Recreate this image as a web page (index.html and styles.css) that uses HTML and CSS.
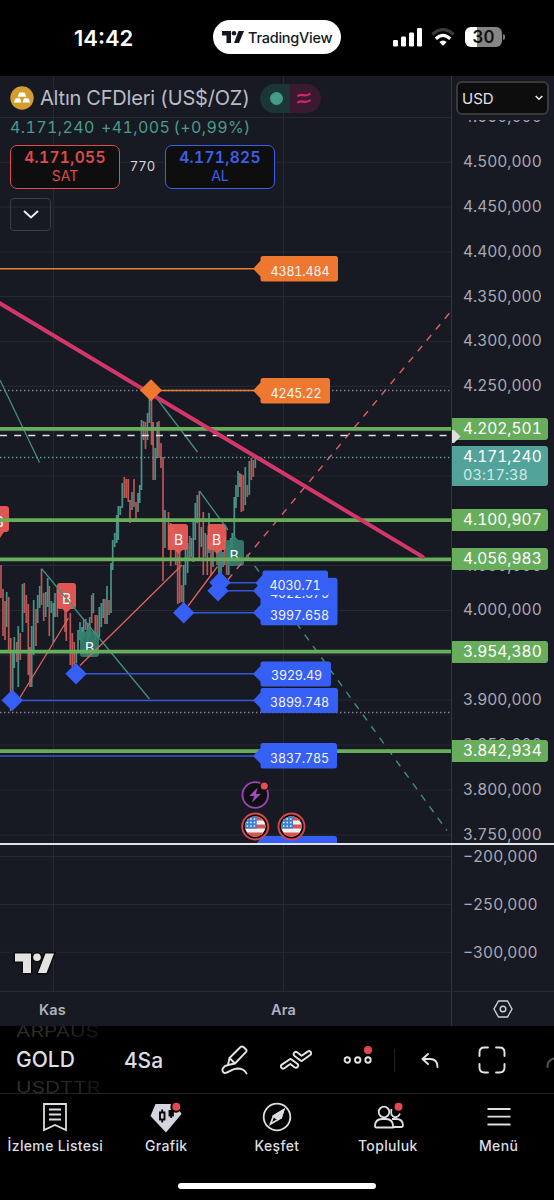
FILE: index.html
```html
<!DOCTYPE html>
<html lang="tr">
<head>
    <meta charset="UTF-8">
    <meta name="viewport" content="width=device-width, initial-scale=1.0">
    <title>GOLD - TradingView</title>
    <link rel="stylesheet" href="styles.css">
</head>
<body>
    <div class="status-bar">
        <div class="clock">14:42</div>
        <div class="island">
            <svg width="22" height="12" viewBox="0 0 22 12"><path d="M0 0h9v12H4.5V4.5H0z"/><circle cx="12" cy="2.3" r="2.3"/><path d="M16.5 0H22l-5 12h-5z"/></svg>
            <span>TradingView</span>
        </div>
        <div class="status-icons">
            <svg width="29" height="19" viewBox="0 0 29 19" fill="#fff"><rect x="0" y="12" width="5" height="6.5" rx="1.3"/><rect x="8" y="8.5" width="5" height="10" rx="1.3"/><rect x="16" y="4.5" width="5" height="14" rx="1.3"/><rect x="24" y="0" width="5" height="18.5" rx="1.3"/></svg>
            <svg class="wifi" width="24" height="19" viewBox="0 0 24 19" fill="none" stroke-width="3.2"><path d="M1.300 6.500Q12-3.500 22.700 6.500" stroke="#3a3a3a"/><path d="M4.800 10.700q7.200-6.600 14.400 0" stroke="#fff"/><path d="M8.300 14q3.700-3 7.400 0L12 17.800z" fill="#fff"/></svg>
            <div class="battery"><span>30</span></div>
        </div>
    </div>

    <div class="chart">
        <div class="chart-main">
            <div class="plot">
                <svg class="plot-svg" width="451" height="915" viewBox="0 76 451 915">
                    <!-- grid -->
                    <path class="grid" d="M53.500 76V991M283.500 76V991M0 117.500H451M0 162.300H451M0 207H451M0 252H451M0 296.500H451M0 341.400H451M0 386.300H451M0 431H451M0 476H451M0 521H451M0 565.500H451M0 610.500H451M0 655H451M0 700H451M0 745H451M0 790H451M0 835H451M0 856.500H451M0 904.500H451M0 952.300H451"/>

                    <!-- bars -->
                    <path class="bars down" d="M1 565V598M3 589V636M5 601V640M8.700 597V650M10.700 638V711M16.700 642V662M20.300 633V660M24.300 583V613M26.300 595V623M28.300 604V675M30 647V687M36 609V646M41.500 569V605M43.700 593V621M49.300 586V636M57.300 588V617M65 605V632M66.300 613V641M70.300 613V665M72.300 633V667M74.300 642V665M85.700 619V630M91.700 595V623M95.300 615V640M97.300 615V637M105 599V624M109 600V615M124.300 477V498M126.300 479V498M128.300 479V502M130 500V523M134 479V507M136 502V522M143.500 421V440M145.500 422V449M151.500 395V445M153.200 422V480M159 421V458M161 443V468M163 457V581M168.500 512V550M170.700 523V566M175.700 530V565M177.700 547V604M179.700 552V603M181.700 585V602M189.700 536V560M199.300 491V560M203.300 512V575M207.300 535V575M211 540V575M217 540V565M224.700 537V565M226.700 547V575M239.700 473V487M241.300 474V512M243.300 475V511M247.300 485V497M251.300 458V480M253.300 460V477"/>
                    <path class="bars up" d="M6.700 592V627M12.700 653V693M14.300 637V668M18.300 626V687M22.500 584V632M31.700 626V687M33.700 600V655M37.700 595V623M39.700 586V608M45.700 592V617M47.700 578V607M51.300 601V613M53.300 603V643M55 593V617M76.300 653V663M78 630V653M80 622V640M82 627V643M83.700 620V637M87.700 623V657M89.700 617V637M93.300 593V613M99.300 607V637M101.300 603V627M103.300 599V618M107 586V624M111 563V613M112.700 540V570M114.700 533V547M116.700 515V543M118.300 506V540M120.300 506V515M122.300 483V508M132 492V510M138 493V512M139.700 485V503M141.500 420V490M147.500 413V440M149.500 395V423M155.200 448V480M157.200 422V458M165 510V548M173 528V550M183.500 565V605M185.500 547V585M187.700 543V573M191.300 538V557M193.300 522V562M195.300 503V540M197.300 495V523M201.300 527V547M205.300 533V557M209 513V553M213 540V567M219 550V583M221 547V577M223 552V567M228.700 545V575M230.700 538V557M232.300 533V560M234.300 497V540M236 485V508M238 471V497M245.300 467V505M249.300 461V495M255.300 457V468"/>

                    <!-- buy / sell marks -->
                    <g class="mark mark-red">
                        <path d="M-10 509q0-3 3-3H6q3 0 3 3v20q0 3-3 3H4l-4 6-4-6h-3q-3 0-3-3z"/>
                        <path d="M57 586q0-3 3-3h13q3 0 3 3v20q0 3-3 3h-2.500l-4 4-4-4H60q-3 0-3-3z"/>
                        <path d="M168 527q0-3 3-3h14q3 0 3 3v20q0 3-3 3h-2.500l-4 4-4-4H171q-3 0-3-3z"/>
                        <path d="M207.500 527q0-3 3-3h13q3 0 3 3v20q0 3-3 3h-2.500l-4 4-4-4h-2.500q-3 0-3-3z"/>
                    </g>
                    <g class="mark mark-green">
                        <path d="M80 635q0-3 3-3h2l4-4 4 4h3q3 0 3 3v19q0 3-3 3H83q-3 0-3-3z"/>
                        <path d="M225.500 543q0-3 3-3h2l4-4 4 4h2.500q3 0 3 3v20q0 3-3 3h-12.500q-3 0-3-3z"/>
                    </g>
                    <g class="mark-text">
                        <text x="-1" y="527">B</text>
                        <text x="66.500" y="603.500">B</text>
                        <text x="178.500" y="544.500">B</text>
                        <text x="216.500" y="544.500">B</text>
                        <text x="89.500" y="653">B</text>
                        <text x="234" y="561">B</text>
                    </g>

                    <!-- trend lines -->
                    <path class="thin teal" d="M0 380L39.500 462.500M155 396L197.500 452M199.500 491L228 530M41.500 568.500L149.500 699"/>
                    <path class="thin red" d="M20 697.500L68.500 618M80 665.500L182 565M188 606L217.500 566.500"/>
                    <path class="dash red" d="M449.300 313.300L228 579.500"/>
                    <path class="dash teal" d="M246.500 554.500L447 830.500"/>

                    <path class="dots" d="M0 390.500H451M0 712.500H451"/>
                    <path class="dots dots-teal" d="M0 457.500H451"/>
                    <path class="level" d="M0 428.900H451M0 520.200H451M0 559.300H451M0 651.700H451M0 751.200H451"/>
                    <path class="alert-line" d="M0 435.500H451"/>
                    <path class="trend" d="M-2 302.100L422.700 556.900"/>

                    <!-- pivots -->
                    <path class="pivot orange-line" d="M0 268.700H256M151 390.500H256"/>
                    <path class="pivot blue-line" d="M220 582.700H258M218 590.700H256M184 612.700H256M76 673.700H256M12 700.500H256M0 756H256"/>
                    <path class="orange" d="M151 379.300l11 11-11 11-11-11z"/>
                    <path class="blue" d="M220 571.700l10.700 10.700-10.700 10.700-10.700-10.700zM218 580l10.700 10.700L218 601.400l-10.700-10.700zM183.700 602l10.700 10.700-10.700 10.700-10.700-10.700zM76 663l10.700 10.700L76 684.400l-10.700-10.700zM12.300 689.600L23 700.300 12.300 711 1.600 700.300z"/>

                    <!-- pivot labels -->
                    <g class="orange">
                        <path d="M253 268.700l7.500-8v-2q0-2.700 2.500-2.700h72.500q2.500 0 2.500 2.500V279q0 2.500-2.500 2.500H263q-2.500 0-2.500-2.500v-2.500z"/>
                        <path d="M253 390.500l7.500-8v-2q0-2.500 2.500-2.500h64.500q2.500 0 2.500 2.500v20.500q0 2.500-2.500 2.500H263q-2.500 0-2.500-2.500v-2.500z"/>
                    </g>
                    <g class="blue">
                        <path d="M253 590.700l7.500-8v-5h74.500q2.500 0 2.500 2.500v42.500q0 2.500-2.500 2.500H263q-2.500 0-2.500-2.500v-2.500l-7.500-7.500 7.500-8v-6z"/>
                    </g>
                    <text class="tag-text" x="270" y="598" textLength="59">4022.675</text>
                    <g class="blue">
                        <path d="M255.500 583l7-8v-2q0-2.500 2.500-2.500h60.500q2.500 0 2.500 2.500v22h-65.500v-4z"/>
                        <path d="M253 674l7.500-8v-2q0-2.500 2.500-2.500h65.500q2.500 0 2.500 2.500v20q0 2.500-2.500 2.500H263q-2.500 0-2.500-2.500v-2.500z"/>
                        <path d="M253 700.500l7.500-8v-2q0-2.500 2.500-2.500h72.500q2.500 0 2.500 2.500v20q0 2.500-2.500 2.500H263q-2.500 0-2.500-2.500v-2.500z"/>
                        <path d="M253 756l7.500-8v-2.500q0-2.500 2.500-2.500h71.500q2.500 0 2.500 2.500v20.500q0 2.500-2.500 2.500H263q-2.500 0-2.500-2.500v-2.500z"/>
                        <path d="M257 843l3.500-5q.5-2 2.500-2h71.500q2.500 0 2.500 2.500V843z"/>
                    </g>
                    <g class="tag-text">
                        <text x="270.500" y="276" textLength="59">4381.484</text>
                        <text x="270.500" y="398.300" textLength="51">4245.22</text>
                        <text x="269.500" y="590.300" textLength="51">4030.71</text>
                        <text x="270" y="620" textLength="59">3997.658</text>
                        <text x="271" y="680.300" textLength="51">3929.49</text>
                        <text x="270" y="707.300" textLength="59">3899.748</text>
                        <text x="270" y="763.300" textLength="59">3837.785</text>
                    </g>

                    <!-- events -->
                    <circle cx="255.300" cy="795" r="12.800" fill="#101014" stroke="#9a46b4" stroke-width="1.800"/>
                    <path d="M257.500 787.500l-8 8.500h4.700l-2.200 6.500 9-8.500h-5z" fill="#a34cbd"/>
                    <circle cx="264.300" cy="786" r="4.800" fill="#131319"/>
                    <circle cx="264.300" cy="786" r="3.500" fill="#ec4a4d"/>
                    <defs>
                        <clipPath id="flag-clip"><circle cx="0" cy="0" r="10.300"/></clipPath>
                        <g id="flag">
                            <circle cx="0" cy="0" r="13" fill="#0c0c0e" stroke="#dc4648" stroke-width="1.900"/>
                            <g clip-path="url(#flag-clip)">
                                <path d="M-11-11h22v22h-22z" fill="#f3f1f2"/>
                                <path d="M-11-10.500h22v4.500h-22zM-11-2h22v4h-22zM-11 6h22V11h-22z" fill="#d9544f"/>
                                <path d="M-11-11H1.500V2h-12.500z" fill="#3f7fd0"/>
                                <path d="M-8.500-7.500H1M-8.500-4H1M-8.500-.5H1" stroke="#e8f2fb" stroke-width="1.500" stroke-dasharray="1.500 2"/>
                            </g>
                        </g>
                    </defs>
                    <use href="#flag" x="255.200" y="826.500"/>
                    <use href="#flag" x="291.500" y="826.500"/>

                    <!-- logo -->
                    <g fill="#e3e3e1" stroke="#0c0c0d" stroke-width="3" paint-order="stroke">
                        <path d="M15 953.500h16V973h-8v-11.500h-8z"/>
                        <path d="M45.500 953.500H54L46.500 973H38z"/>
                        <circle cx="37" cy="957.200" r="3.800"/>
                    </g>
                </svg>

                <div class="legend">
                    <div class="legend-title">
                        <svg width="24" height="24" viewBox="0 0 24 24"><circle cx="12" cy="12" r="11.700" fill="#d49c31"/><path d="M9.300 6.500h5.400l1.700 4.300H7.600zM5.600 12.300h4.400l1.500 4.200H3.800zM14 12.300h4.400l1.800 4.200h-7.700z" fill="#fff"/></svg>
                        <h1>Altın CFDleri (US$/OZ)</h1>
                        <div class="market-state">
                            <span class="open"></span>
                            <span class="delayed"><svg width="16" height="13" viewBox="0 0 16 13" fill="none" stroke="#d52568" stroke-width="2.100"><path d="M1.500 4.500C5 0 8.500 6.500 14.500 1.500M1.500 11C5 6.500 8.500 13 14.500 8"/></svg></span>
                        </div>
                    </div>
                    <div class="quote"><span>4.171,240</span><span>+41,005</span><span>(+0,99%)</span></div>
                    <div class="trade">
                        <div class="trade-button sell"><b>4.171,055</b><span>SAT</span></div>
                        <div class="spread">770</div>
                        <div class="trade-button buy"><b>4.171,825</b><span>AL</span></div>
                    </div>
                    <div class="collapse"><svg width="16" height="9" viewBox="0 0 16 9" fill="none" stroke="#ececec" stroke-width="2"><path d="M1 1l7 6.500L15 1"/></svg></div>
                </div>
            </div>

            <div class="price-axis">
                <div class="scale">
                    <div>4.550,000</div>
                    <div>4.500,000</div>
                    <div>4.450,000</div>
                    <div>4.400,000</div>
                    <div>4.350,000</div>
                    <div>4.300,000</div>
                    <div>4.250,000</div>
                    <div></div>
                    <div></div>
                    <div></div>
                    <div>4.050,000</div>
                    <div>4.000,000</div>
                    <div></div>
                    <div>3.900,000</div>
                    <div>3.850,000</div>
                    <div>3.800,000</div>
                    <div>3.750,000</div>
                </div>
                <div class="scale scale-lower">
                    <div>−200,000</div>
                    <div>−250,000</div>
                    <div>−300,000</div>
                </div>
                <div class="currency">USD <svg width="8" height="6" viewBox="0 0 8 6" fill="none" stroke="#eee" stroke-width="1.600"><path d="M.7 1L4 4.200 7.300 1"/></svg></div>
                <div class="price-tag tag-1">4.202,501</div>
                <div class="price-tag last"><span>4.171,240</span><small>03:17:38</small></div>
                <div class="price-tag tag-2">4.100,907</div>
                <div class="price-tag tag-3">4.056,983</div>
                <div class="price-tag tag-4">3.954,380</div>
                <div class="price-tag tag-5">3.842,934</div>
                <svg class="alert-handle" width="9" height="15" viewBox="0 0 9 15"><path d="M0 1l2 0 6.500 6.500L2 14H0z" fill="#dedede"/></svg>
            </div>
            <div class="pane-separator"></div>
        </div>

        <div class="time-axis">
            <div class="months"><span>Kas</span><span>Ara</span></div>
            <div class="axis-settings">
                <svg width="20" height="18" viewBox="0 0 20 18" fill="none" stroke="#d0d1d6" stroke-width="1.400"><path d="M5.500 1h9L19 9l-4.500 8h-9L1 9z"/><circle cx="10" cy="9" r="2.800"/></svg>
            </div>
        </div>
    </div>

    <div class="toolbar">
        <div class="symbol-picker">
            <span class="ghost">ARPAUS</span>
            <span>GOLD</span>
            <span class="ghost">USDTTR</span>
        </div>
        <div class="interval">4Sa</div>
        <svg class="tool draw" width="28" height="30" viewBox="0 0 28 30"><path d="M7 20l1.500-7L19.500 2q1.500-1.200 3 0l2.300 2.200q1.500 1.500 0 3L14 18.500zM8.500 13l5.500 5.500M7 20c-5 1-7 5-4.500 7.500C6 30 9 24 16 23.500c5 0 8 1.500 9.500 5"/></svg>
        <svg class="tool patterns" width="32" height="20" viewBox="0 0 32 20"><path d="M9.500 9.500q1-.9 2 0l5.800 4.300q1.800 1.600.3 3.200-1.400 1.500-3.200.2l-4.100-3.300-6 4.300Q2.500 19.300 1.400 17.700 0 16 1.800 14.600zM22.500 10.500q-1 .9-2 0l-6-4.600Q12.800 4.300 14.300 2.600q1.400-1.500 3.200-.2l4.100 3.400 6-4.200q1.800-1.200 3 .3 1.400 1.700-.4 3.100z"/></svg>
        <svg class="tool more" width="30" height="26" viewBox="0 0 30 26"><circle cx="4.300" cy="15" r="2.700"/><circle cx="14.700" cy="15" r="2.700"/><circle cx="25" cy="15" r="2.700"/><circle class="badge-dot" cx="25" cy="5" r="4"/></svg>
        <div class="divider"></div>
        <svg class="tool undo" width="18" height="15" viewBox="0 0 18 15"><path d="M7 1L1.500 6 7 11M1.500 6H9q7.500 0 7.500 8"/></svg>
        <svg class="tool fullscreen" width="28" height="28" viewBox="0 0 28 28"><path d="M1.500 10V6.500q0-5 5-5H10M18 1.500h3.500q5 0 5 5V10M26.500 18v3.500q0 5-5 5H18M10 26.500H6.500q-5 0-5-5V18"/></svg>
        <svg class="tool partial" width="8" height="11" viewBox="0 0 8 11"><path d="M1.500 10Q1 3.500 8 1.500"/></svg>
    </div>

    <div class="bottom-nav">
        <div class="nav-item">
            <svg width="34" height="34" viewBox="0 0 34 34"><path d="M6 4h22v26l-11-5-11 5zM11 9.500h12M11 14.500h12M11 19.500h12"/></svg>
            <span>İzleme Listesi</span>
        </div>
        <div class="nav-item">
            <svg width="34" height="34" viewBox="0 0 34 34"><path d="M6.500 4h20L32.500 14 17 32.500 1.500 16z" fill="#d4d5df" stroke="none"/><path d="M11 12.500h4.500v7H11zM13.200 9.500v3M13.200 19.500v3" stroke="#08080a" stroke-width="1.900"/><path d="M20.500 11h3.500v4.500h-3.500zM22.200 14v4" fill="#08080a" stroke="#08080a"/><circle cx="27" cy="7" r="5.700" fill="#020202" stroke="none"/><circle class="badge-dot" cx="27.300" cy="6.700" r="4"/></svg>
            <span>Grafik</span>
        </div>
        <div class="nav-item">
            <svg width="34" height="34" viewBox="0 0 34 34"><circle cx="17" cy="17" r="13.300"/><path d="M23.500 10l-2.500 8-10.500 6 3-8z"/><path d="M23.500 10l-2.500 8-4.500.500-3-2.500z" fill="#d9d9de"/></svg>
            <span>Keşfet</span>
        </div>
        <div class="nav-item">
            <svg width="34" height="34" viewBox="0 0 34 34"><circle cx="13" cy="12" r="5.300"/><path d="M4 26.500q0-7.500 7-7.500h4q7 0 7 7.500v1H5.500Q4 27.500 4 26.500zM21 19h4q7 0 7 6.500 0 1.500-1.500 1.500H22M20.500 9q-1.500 7 3 8 4 .5 5.500-3.500"/><circle class="badge-dot" cx="27.500" cy="6.800" r="4"/></svg>
            <span>Topluluk</span>
        </div>
        <div class="nav-item">
            <svg width="34" height="34" viewBox="0 0 34 34"><path d="M5.500 9h23M5.500 16.700h23M5.500 24.500h23"/></svg>
            <span>Menü</span>
        </div>
    </div>
    <div class="home-indicator"></div>
</body>
</html>
```
FILE: styles.css
```css
* {
    box-sizing: border-box;
}

body {
    margin: 0;
    width: 554px;
    height: 1200px;
    overflow: hidden;
    background: #000;
    color: #dedee2;
    font-family: Inter, "Liberation Sans", sans-serif;
    font-variant-numeric: tabular-nums;
    display: flex;
    flex-direction: column;
}

svg {
    display: block;
    flex: none;
}

/* status bar */
.status-bar {
    height: 76px;
    padding: 0 52px 2px 74px;
    display: flex;
    align-items: center;
    flex: none;
    color: #fff;
}

.clock {
    width: 139px;
    font-size: 22px;
    font-weight: 600;
    font-variant-numeric: normal;
    padding-top: 1px;
}

.island {
    width: 128px;
    height: 34px;
    border-radius: 17px;
    background: #fff;
    color: #131722;
    display: flex;
    align-items: center;
    padding-left: 9px;
    gap: 4px;
    font-size: 14.5px;
    font-weight: 500;
    letter-spacing: -0.25px;
}

.island svg {
    fill: #131722;
}

.status-icons {
    margin-left: auto;
    display: flex;
    align-items: center;
}

.wifi {
    margin: 0 10px 0 9px;
}

.battery {
    width: 37px;
    height: 20px;
    border-radius: 6px;
    background: linear-gradient(90deg, #fff 0 12px, #858585 12px);
    color: #111;
    font-size: 17px;
    font-weight: 600;
    line-height: 20px;
    text-align: center;
    position: relative;
}

.battery::after {
    content: "";
    position: absolute;
    left: 38px;
    top: 7px;
    width: 2px;
    height: 6px;
    border-radius: 0 2px 2px 0;
    background: #777;
}

/* chart */
.chart {
    height: 950px;
    flex: none;
    background: #171923;
}

.chart-main {
    height: 915px;
    display: flex;
    position: relative;
}

.plot {
    width: 451px;
    position: relative;
}

.grid {
    stroke: #272933;
    fill: none;
}

.bars {
    stroke-width: 1.7;
    fill: none;
}

.down {
    stroke: #bd5655;
}

.up {
    stroke: #4a9288;
}

.mark-red {
    fill: #ee5c58;
    opacity: 0.93;
}

.mark-green {
    fill: #34816f;
    opacity: 0.9;
}

.mark-text {
    fill: #fff;
    font-size: 14px;
    text-anchor: middle;
}

.thin {
    fill: none;
    stroke-width: 1.3;
}

.teal {
    stroke: #438e80;
}

.red {
    stroke: #df615f;
}

.dash {
    fill: none;
    stroke-width: 1.4;
    stroke-dasharray: 7 7.15;
}

.dots {
    stroke: #85878f;
    stroke-width: 1.3;
    stroke-dasharray: 1.4 2.6;
}

.dots-teal {
    stroke: #5b9f98;
}

.level {
    stroke: #67ad5b;
    stroke-width: 3.8;
}

.alert-line {
    stroke: #e0e0e2;
    stroke-width: 1.5;
    stroke-dasharray: 7 7.18;
}

.trend {
    stroke: #d33669;
    stroke-width: 4;
    stroke-linecap: round;
}

.pivot {
    stroke-width: 1.4;
}

.orange-line {
    stroke: #e88033;
}

.blue-line {
    stroke: #3556d8;
}

.orange {
    fill: #ee782f;
}

.blue {
    fill: #365ff5;
}

.tag-text {
    fill: #f5f5f8;
    font-size: 12.5px;
}

/* legend over the plot */
.legend {
    position: absolute;
    top: 7px;
    left: 10px;
}

.legend-title {
    display: flex;
    align-items: center;
    height: 30px;
}

.legend-title h1 {
    margin: 0 0 0 6px;
    width: 220px;
    font-size: 20px;
    font-weight: 400;
    letter-spacing: -0.2px;
    color: #babcc5;
    white-space: nowrap;
}

.market-state {
    display: flex;
    width: 61px;
    height: 29px;
    border-radius: 15px;
    overflow: hidden;
}

.market-state span {
    flex: 1;
    display: flex;
    align-items: center;
    justify-content: center;
}

.open {
    background: #1c3537;
}

.open::before {
    content: "";
    width: 13px;
    height: 13px;
    border-radius: 50%;
    background: #459c86;
    margin-left: 3px;
}

.delayed {
    background: #3b1930;
    padding-right: 2px;
}

.quote {
    display: flex;
    height: 28px;
    align-items: center;
    font-size: 16px;
    letter-spacing: 0.4px;
    color: #4a9c8c;
}

.quote span:first-child {
    width: 91px;
}

.quote span:nth-child(2) {
    width: 72.5px;
}

.trade {
    display: flex;
    margin-top: 3.5px;
}

.trade-button {
    width: 110px;
    height: 44px;
    border: 1.5px solid;
    border-radius: 7px;
    background: #0e0e0f;
    display: flex;
    flex-direction: column;
    align-items: center;
    padding-top: 3px;
    font-size: 14px;
    line-height: 18px;
}

.trade-button b {
    font-size: 15.5px;
    font-weight: 600;
    letter-spacing: 0.35px;
}

.sell {
    color: #dd4b4d;
}

.buy {
    color: #3d60ea;
}

.spread {
    width: 45px;
    line-height: 43px;
    text-align: center;
    font-size: 13px;
    color: #d6d6da;
}

.collapse {
    margin-top: 9px;
    width: 41px;
    height: 33px;
    border: 1.5px solid #3d3e43;
    border-radius: 4px;
    display: flex;
    align-items: center;
    justify-content: center;
}

/* price axis */
.price-axis {
    width: 103px;
    border-left: 1px solid #32343e;
    position: relative;
}

.scale {
    padding: 18.300px 0 0 11px;
    font-size: 15.5px;
    color: #a8aab3;
}

.scale div {
    height: 44.83px;
    line-height: 45px;
}

.scale-lower {
    padding-top: 0;
}

.scale-lower div {
    height: 47.6px;
    line-height: 1px;
}

.currency {
    position: absolute;
    top: 5px;
    left: 4px;
    width: 93px;
    height: 34px;
    border: 2px solid #393939;
    border-radius: 6px;
    background: #0d0d0d;
    box-shadow: 0 5px 0 #171923;
    color: #e2e2e4;
    padding: 0 4px;
    display: flex;
    align-items: center;
    justify-content: space-between;
    font-size: 15px;
}

.price-tag {
    position: absolute;
    left: 0;
    width: 95.5px;
    height: 22px;
    padding-left: 11px;
    border-radius: 0 3px 3px 0;
    background: #67ad5b;
    color: #fff;
    font-size: 15.5px;
    line-height: 21px;
}

.tag-1 {
    top: 342px;
}

.tag-2 {
    top: 433px;
}

.tag-3 {
    top: 472px;
}

.tag-4 {
    top: 565px;
}

.tag-5 {
    top: 664px;
}

.last {
    top: 370px;
    height: 40px;
    background: #52a39a;
    display: flex;
    flex-direction: column;
}

.last small {
    font-size: 14.5px;
    line-height: 15px;
    letter-spacing: 0.1px;
    color: #d0e8e4;
}

.alert-handle {
    position: absolute;
    top: 353px;
    left: 0;
}

.pane-separator {
    position: absolute;
    top: 767px;
    left: 0;
    width: 100%;
    height: 1.500px;
    background: #e2e2e5;
}

/* time axis */
.time-axis {
    height: 35px;
    border-top: 1px solid #292b35;
    display: flex;
}

.months {
    width: 451px;
    display: flex;
    align-items: center;
    font-size: 14.5px;
    font-weight: 600;
    letter-spacing: 0.2px;
    color: #b0b2bb;
}

.months span {
    width: 105px;
    text-align: center;
}

.months span:last-child {
    margin-left: 126px;
}

.axis-settings {
    flex: 1;
    border-left: 1px solid #32343e;
    display: flex;
    align-items: center;
    justify-content: center;
}

/* toolbar */
.toolbar {
    height: 68px;
    flex: none;
    border-bottom: 1px solid #222;
    display: flex;
    align-items: center;
    padding: 1px 0 0 16px;
    overflow: hidden;
}

.symbol-picker {
    width: 108px;
    font-size: 21px;
    font-weight: 500;
    line-height: 28px;
    display: flex;
    flex-direction: column;
}

.ghost {
    transform: scaleY(0.75);
    font-weight: 400;
    color: transparent;
    background: linear-gradient(90deg, #303030, #262626 55px, #111 85px);
    background-clip: text;
    -webkit-background-clip: text;
}

.interval {
    width: 97px;
    font-size: 21px;
    font-weight: 500;
}

.tool {
    fill: none;
    stroke: #e4e4e6;
    stroke-width: 1.9;
    stroke-linejoin: round;
    stroke-linecap: round;
}

.badge-dot {
    fill: #e74650;
    stroke: none;
}

.patterns {
    margin-left: 31px;
}

.more {
    margin: 0 0 5px 31px;
}

.divider {
    width: 1px;
    height: 23px;
    margin-left: 21px;
    background: #222;
}

.undo {
    margin-left: 26px;
}

.fullscreen {
    margin-left: 39px;
}

.partial {
    margin: 4px 0 0 40px;
    stroke: #55565b;
}

/* bottom navigation */
.bottom-nav {
    height: 89px;
    flex: none;
    padding-top: 6px;
    display: flex;
}

.nav-item {
    width: 110.8px;
    display: flex;
    flex-direction: column;
    align-items: center;
    gap: 3px;
    font-size: 14px;
    font-weight: 500;
    letter-spacing: 0.35px;
    white-space: nowrap;
}

.nav-item svg {
    fill: none;
    stroke: #dedee3;
    stroke-width: 1.8;
}

.nav-item .badge-dot {
    fill: #e74650;
    stroke: none;
}

.home-indicator {
    width: 198px;
    height: 6px;
    margin-left: 178px;
    border-radius: 3px;
    background: #fff;
    flex: none;
}
```
